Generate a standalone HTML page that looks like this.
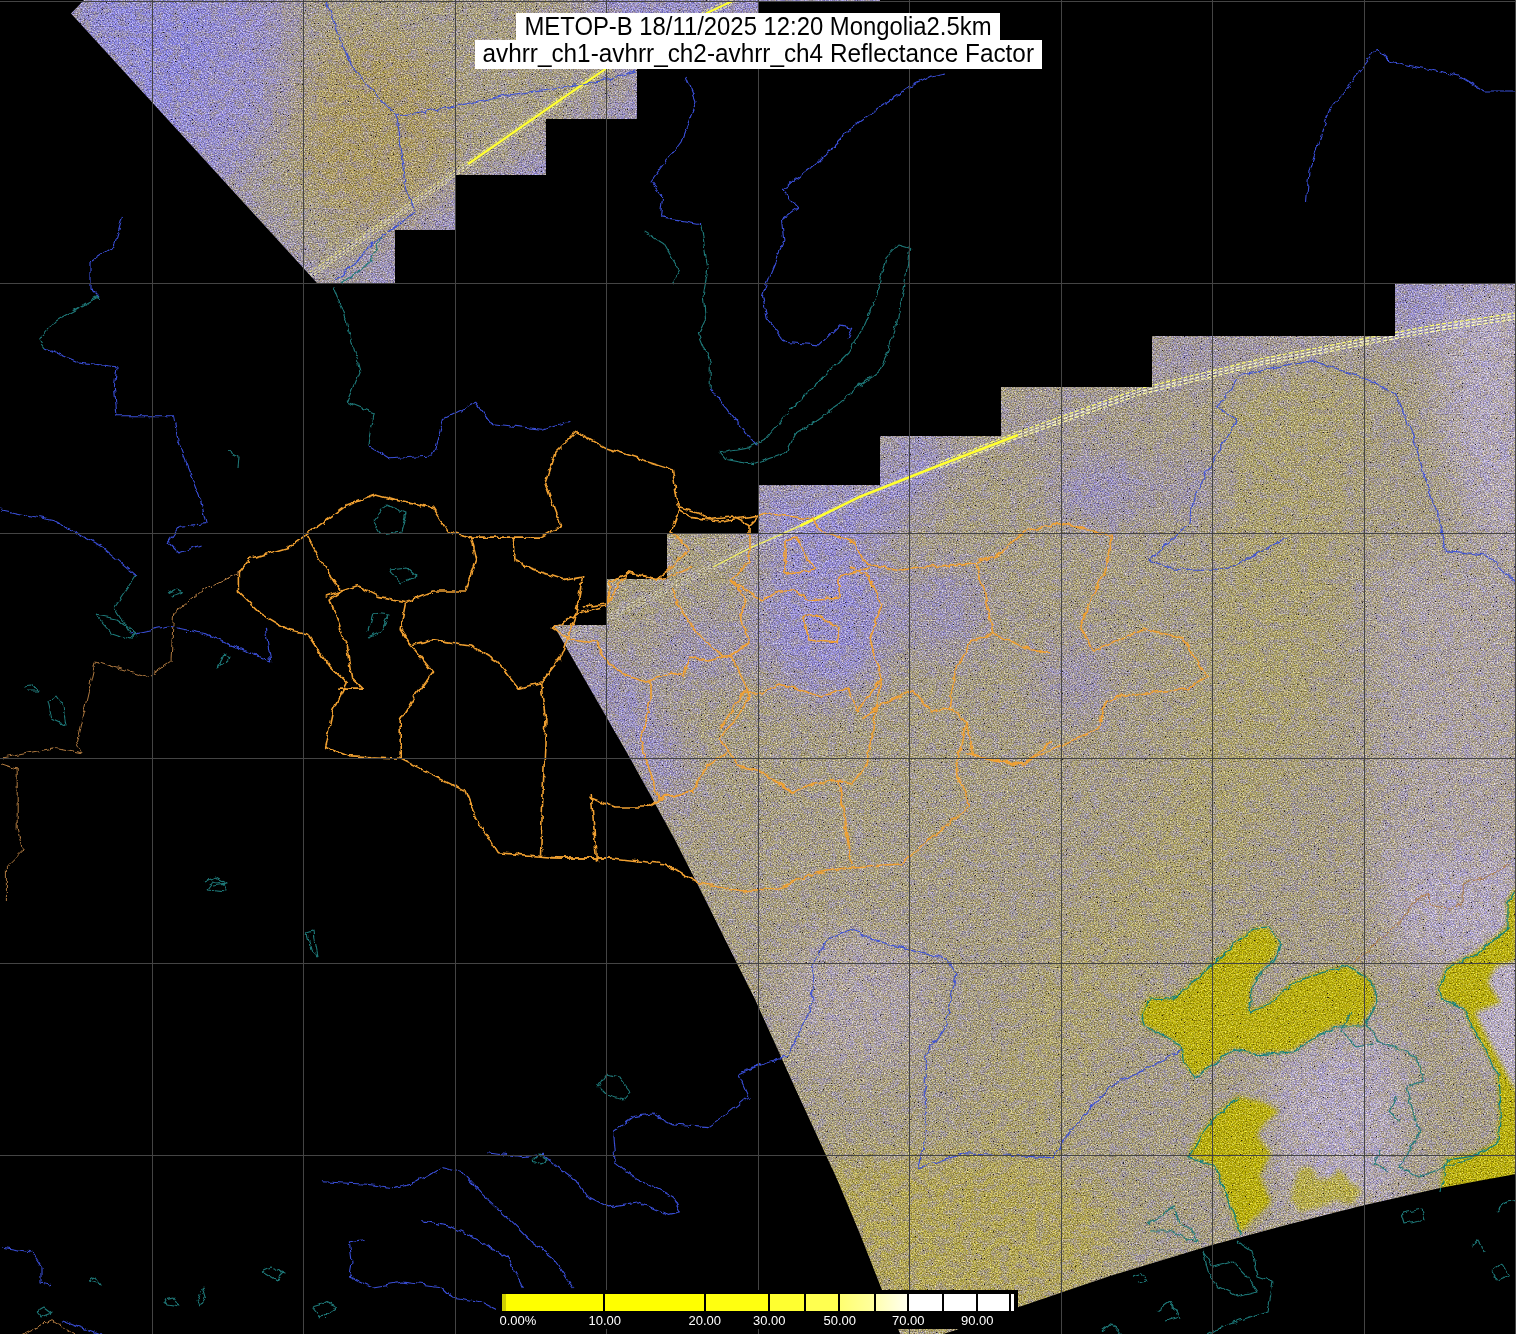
<!DOCTYPE html>
<html><head><meta charset="utf-8"><title>METOP-B</title>
<style>
html,body{margin:0;padding:0;background:#000;width:1516px;height:1334px;overflow:hidden}
svg{position:absolute;left:0;top:0;display:block}
</style></head><body>
<svg width="1516" height="1334" viewBox="0 0 1516 1334">
<defs>
<clipPath id="sw"><path d="M84,0 L71,13.5 L317,283 L395,283 L395,230 L455.5,230 L455.5,175 L546,175 L546,119 L637,119 L637,60 L758.5,60 L758.5,2 L880,2 L880,0 Z M553.4,625 L607,625 L607,579 L667,579 L667,533 L758.5,533 L758.5,485 L880,485 L880,436 L1001,436 L1001,387 L1152,387 L1152,336 L1395,336 L1395,284 L1516,284 L1516,1174 L1440,1188 L1365,1205 L1290,1224 L1212,1245 L1110,1276 L1016,1308 L956,1330 L905,1346 L882,1290 L860,1234 L837.4,1180 L796,1090 L755.3,1000 L736.8,963 L706,901 L675,840 L652,798 L629.4,757 Z"/></clipPath>
<filter id="bl" x="-10%" y="-10%" width="120%" height="120%"><feGaussianBlur stdDeviation="20"/></filter>
<filter id="bl2" x="-10%" y="-10%" width="120%" height="120%"><feGaussianBlur stdDeviation="2"/></filter>
<filter id="nz" x="0" y="0" width="1516" height="1334" filterUnits="userSpaceOnUse" color-interpolation-filters="sRGB">
  <feTurbulence type="fractalNoise" baseFrequency="0.71 0.83" numOctaves="2" seed="7" result="t"/>
  <feColorMatrix in="t" type="matrix" values="0.7 0.22 0.08 0 0  0.7 0.2 0 0.1 0  0.7 -0.28 0 0 0.28  0 0 0 0 1" result="t2"/>
  <feComposite in="SourceGraphic" in2="t2" operator="arithmetic" k1="0" k2="1" k3="1.2" k4="-0.6" result="c"/>
  <feTurbulence type="fractalNoise" baseFrequency="0.77" numOctaves="1" seed="21" result="s"/>
  <feColorMatrix in="s" type="matrix" values="0 0 0 0 0.12  0 0 0 0 0.1  0 0 0 0 0.12  40 0 0 0 -29.4" result="sp"/>
  <feComposite in="sp" in2="c" operator="over"/>
</filter>
<filter id="mot2" x="0" y="0" width="1516" height="1334" filterUnits="userSpaceOnUse" color-interpolation-filters="sRGB">
  <feTurbulence type="fractalNoise" baseFrequency="0.11 0.13" numOctaves="2" seed="29"/>
  <feColorMatrix type="matrix" values="0 0 0 0 0.66  0 0 0 0 0.6  0 0 0 0 0.42  4.5 0 0 0 -2.0"/>
</filter>
<filter id="mot" x="0" y="0" width="1516" height="1334" filterUnits="userSpaceOnUse" color-interpolation-filters="sRGB">
  <feTurbulence type="fractalNoise" baseFrequency="0.11 0.13" numOctaves="2" seed="11"/>
  <feColorMatrix type="matrix" values="0 0 0 0 0.58  0 0 0 0 0.55  0 0 0 0 0.84  4.5 0 0 0 -2.0"/>
</filter>
<filter id="jag" x="0" y="0" width="1516" height="1334" filterUnits="userSpaceOnUse">
  <feTurbulence type="turbulence" baseFrequency="0.08" numOctaves="2" seed="5" result="jt"/>
  <feDisplacementMap in="SourceGraphic" in2="jt" scale="5" xChannelSelector="R" yChannelSelector="G"/>
</filter>
<linearGradient id="g5" x1="0" x2="1" y1="0" y2="0"><stop offset="0" stop-color="#ffff70"/><stop offset="1" stop-color="#ffffa0"/></linearGradient><linearGradient id="g6" x1="0" x2="1" y1="0" y2="0"><stop offset="0" stop-color="#ffffb0"/><stop offset="1" stop-color="#fffff0"/></linearGradient>
</defs>
<rect width="1516" height="1334" fill="#000"/>
<g clip-path="url(#sw)"><g filter="url(#nz)">
<rect width="1516" height="1334" fill="#a89f88"/>
<g filter="url(#bl)"><path d="M40,-20 L295,-20 L280,100 L250,180 L300,260 L330,300 L250,300 Z" fill="#978fd0"/><ellipse cx="375" cy="130" rx="75" ry="95" fill="#ab9a68"/><path d="M60,-20 L230,-20 L200,80 L160,140 L100,60 Z" fill="#8c88e2" opacity="0.7"/><ellipse cx="250" cy="210" rx="40" ry="50" fill="#a89f88" opacity="0.5"/><ellipse cx="500" cy="60" rx="50" ry="50" fill="#a89f88" opacity="0.6"/><path d="M320,300 L455,200 L560,140 L650,80 L700,90 L650,140 L560,190 L455,250 L400,300 Z" fill="#978fd0"/><path d="M570,-20 L900,-20 L900,60 L640,70 L600,40 Z" fill="#978fd0"/><path d="M745,478 L880,478 L890,430 L960,430 L930,500 L880,540 L745,545 Z" fill="#978fd0"/><path d="M1380,270 L1530,270 L1530,340 L1380,340 Z" fill="#978fd0"/><path d="M990,420 L1152,375 L1152,330 L1395,330 L1395,320 L1530,300 L1530,320 L1400,338 L1260,360 L1140,392 L1018,437 L990,445 Z" fill="#978fd0" opacity="0.6"/><ellipse cx="825" cy="615" rx="70" ry="85" fill="#978fd0"/><path d="M540,615 L600,640 L650,700 L690,780 L680,820 L630,760 Z" fill="#978fd0"/><ellipse cx="700" cy="650" rx="45" ry="35" fill="#978fd0" opacity="0.7"/><ellipse cx="945" cy="610" rx="40" ry="50" fill="#978fd0" opacity="0.7"/><ellipse cx="1100" cy="490" rx="50" ry="35" fill="#978fd0" opacity="0.8"/><ellipse cx="1190" cy="485" rx="25" ry="25" fill="#978fd0" opacity="0.8"/><ellipse cx="1075" cy="680" rx="35" ry="40" fill="#978fd0" opacity="0.6"/><path d="M1440,300 L1530,300 L1530,560 L1470,520 L1440,420 Z" fill="#b6acc2"/><path d="M1370,560 L1530,540 L1530,900 L1380,880 Z" fill="#b6acc2" opacity="0.5"/><path d="M1230,375 L1360,360 L1340,620 L1300,760 L1230,880 L1150,960 L1080,1100 L1040,1250 L960,1300 L960,1150 L1040,950 L1150,820 L1210,650 Z" fill="#aca274"/><ellipse cx="855" cy="1000" rx="75" ry="70" fill="#b6acc2" opacity="0.55"/><path d="M790,1160 L1000,1150 L1120,1200 L1100,1290 L980,1330 L880,1330 Z" fill="#b2a65a"/><path d="M1380,860 L1530,850 L1530,965 L1400,965 Z" fill="#b6acc2"/><path d="M1262,1065 L1340,1035 L1400,1030 L1405,1195 L1290,1225 L1275,1120 Z" fill="#b6acc2"/><ellipse cx="1470" cy="1090" rx="30" ry="60" fill="#a89f88"/><ellipse cx="1495" cy="1015" rx="25" ry="50" fill="#b6acc2"/></g>
<rect width="1516" height="1334" fill="#fff" filter="url(#mot)" opacity="0.3"/>
<rect width="1516" height="1334" fill="#fff" filter="url(#mot2)" opacity="0.28"/>
<g filter="url(#bl2)"><path d="M1140,1014 L1148.5,997 L1171,998 L1191,982.5 L1214,961 L1240,937 L1254,928 L1268,927 L1279.5,942.7 L1274,957 L1259.6,971 L1252.5,982.6 L1248,1011 L1268,1002.5 L1291,982.6 L1319,971 L1348,965.5 L1370.7,979.7 L1376,999.7 L1362,1025 L1336.5,1025 L1319,1034 L1291,1051 L1256.7,1053.8 L1234,1048 L1211,1065 L1194,1076.6 L1182.7,1062 L1180,1045 L1162.7,1034 L1143,1025 Z" fill="#b7ad16"/><path d="M1214,1116.5 L1237,1096.5 L1262.5,1102 L1279.5,1111 L1262.5,1125 L1256.7,1136 L1271,1153.5 L1259.6,1176 L1271,1202 L1239.7,1233 L1225.4,1193 L1214,1165 L1188,1156 L1199.8,1133.6 Z" fill="#b7ad16"/><path d="M1516,885.5 L1507,900.8 L1507,926.3 L1476.5,951.8 L1445.9,967 L1438,987.5 L1440.8,997.7 L1463.7,1007.9 L1471.4,1028.3 L1484.1,1048.7 L1496.9,1071.6 L1499.4,1115 L1496.9,1140.5 L1476.5,1153.2 L1445.9,1158.3 L1440,1190 L1516,1190 Z" fill="#b7ad16"/><path d="M1298,1170 L1312,1165 L1318,1180 L1330,1178 L1340,1168 L1350,1182 L1362,1190 L1352,1205 L1335,1200 L1320,1208 L1300,1212 L1290,1198 Z" fill="#b7ad16" opacity="0.6"/><path d="M1516,962 L1497,967 L1489,982 L1502,1003 L1476.5,1013 L1489,1038.5 L1507,1071.6 L1516,1089.5 Z" fill="#b6acc2"/></g>
</g>
<g fill="none"><path d="M310,275 L440,184 L560,100 L606,68.6 L708,12.5 L732,1.3" stroke="#ffffd0" stroke-width="1" stroke-dasharray="3,2" opacity="0.85"/><path d="M940,465 L1018,435 L1140,391.5 L1260,362 L1388,337 L1435,328 L1516,316" stroke="#ffffd0" stroke-width="1.2" stroke-dasharray="4,2" opacity="1"/><path d="M556.5,641.5 L636,604 L713,567 L751,547.5 L790,532.7 L860,496.7 L940,465" stroke="#f8f8e0" stroke-width="1" stroke-dasharray="3,3" opacity="0.6"/><path d="M310,272 L440,181 L560,97 L606,65.6 L708,9.5 L732,-1.7" stroke="#ffff70" stroke-width="1" stroke-dasharray="3,2" opacity="0.85"/><path d="M940,462 L1018,432 L1140,388.5 L1260,359 L1388,334 L1435,325 L1516,313" stroke="#ffff70" stroke-width="1.2" stroke-dasharray="4,2" opacity="1"/><path d="M556.5,638.5 L636,601 L713,564 L751,544.5 L790,529.7 L860,493.7 L940,462" stroke="#f8f8e0" stroke-width="1" stroke-dasharray="3,3" opacity="0.6"/><path d="M310,278 L440,187 L560,103 L606,71.6 L708,15.5 L732,4.3" stroke="#ffffa0" stroke-width="1" stroke-dasharray="3,2" opacity="0.85"/><path d="M940,468 L1018,438 L1140,394.5 L1260,365 L1388,340 L1435,331 L1516,319" stroke="#ffffa0" stroke-width="1.2" stroke-dasharray="4,2" opacity="1"/><path d="M556.5,644.5 L636,607 L713,570 L751,550.5 L790,535.7 L860,499.7 L940,468" stroke="#f8f8e0" stroke-width="1" stroke-dasharray="3,3" opacity="0.6"/><path d="M468,164 L560,100 L606,68.6 L708,12.5 L732,1.3" stroke="#ffff30" stroke-width="2.2"/><path d="M713,567 L751,547.5 L800,526" stroke="#ffff50" stroke-width="1.4" opacity="0.8"/><path d="M800,526 L860,496.7 L940,465 L1018,435" stroke="#ffff30" stroke-width="2.6"/></g>
</g>
<g fill="none" stroke="#f0a030" stroke-width="1.6" stroke-linejoin="round" opacity="1" filter="url(#jag)"><path d="M237.4,571 L248.2,557.6 L286,546.8 L304.8,533.4 L345.3,503.7 L375,492.9 L393.8,498.3 L431.6,506.4 L447.8,530.7 L469.4,536.1 L517.9,536.1 L539.5,536.1 L560,525.3 L554,509.7 L543.8,482 L554,451 L574.8,430.3 L605.9,447.6 L671.4,468 L678,509.7 L690,516.6 L720,520 L759,514"/><path d="M237.4,571 L237.4,590 L259,611.6 L286,627.8 L307.5,633.2 L329,665.5 L345.3,681.7 L331.8,708.7 L323.7,746.5 L345.3,754.6 L399.2,757.3 L464,789.6 L474.7,816.6 L496.3,851.7 L560,857 L610,857"/><path d="M304.8,533.4 L318.3,557.6 L339.9,590 L329,598.1 L345.3,644 L350.7,676.3 L361.5,687.1 L337.2,687.1"/><path d="M323.7,595.4 L356,584.6 L377.6,595.4 L404.6,600.8 L431.6,590 L464,590 L474.7,557.6 L469.4,536.1"/><path d="M404.6,600.8 L399.2,627.8 L410,644 L431.6,671 L415.4,692.5 L399.2,719.5 L399.2,757.3"/><path d="M410,644 L431.6,638.6 L469.4,644 L496.3,660.2 L517.9,687.1 L539.5,681.7 L560,654.8 L574.8,613 L581.7,575 L561,578.6 L530,568 L512.8,558 L512.5,536.1"/><path d="M539.5,681.7 L544.9,719.5 L539.5,854.5"/><path d="M590.3,794 L595.5,859.7"/><path d="M581.7,606 L606,602.8 L609,582 L626.6,571.7 L661,578.6 L690,565"/><path d="M550,626 L568,638 L595,641 L607,662 L625,674 L646,680 L670,671 L682,674 L688,656 L706,659 L730,653 L748,641 L739,614 L745,596 L730,578 L748,560 L748,524 L760,512 L811,518 L820,530 L850,539 L865,563 L900,569 L907.6,568.3 L938,565 L975,561.6 L995.3,554.8 L1022.3,531.2 L1059.7,522.1 L1110.7,534.9 L1104.4,566.7 L1078.9,624.1 L1091.6,649.6 L1142.6,627.3 L1180.8,636.8 L1206.3,675 L1187.2,687.8 L1123.5,694.2 L1104.4,700.5 L1098,726 L1072.5,738.8 L1015.2,764.3 L964.2,751.5"/><path d="M550,626 L559,623 L580,611 L604,605 L619,581 L628,572 L655,578 L667,569 L688,548 L676,536 L670,530 L679,506 L700,512 L706,518 L730,515 L742,521 L748,524"/><path d="M670,587 L679,608 L694,629 L718,653 L730,656 L742,680 L748,695 L736,716 L724,728 L718,737 L727,749 L724,752 L706,764 L691,791 L658,797 L646,764 L640,740 L649,698 L649,680"/><path d="M589,797 L613,806 L646,806 L661,797 L691,791"/><path d="M727,749 L736,764 L760,770 L778,782 L790,791 L814,782 L838,779 L850,782 L865,764 L874,716 L880,677 L868,638 L880,605 L868,575 L850,566"/><path d="M838,779 L850,863"/><path d="M718,728 L742,692 L760,692 L778,683 L820,695 L847,686 L856,710 L880,677"/><path d="M730,578 L760,599 L778,590 L796,590 L808,599 L838,596 L838,575 L868,566"/><path d="M784,539 L796,536 L808,560 L814,569 L784,572 L784,539"/><path d="M802,614 L814,614 L838,626 L835,641 L808,638 L802,614"/><path d="M550,857 L610,857 L664,863 L694,881 L742,890 L778,887 L814,872 L850,866 L900,863 L921.1,845 L968.4,804.5 L954.9,767.4 L965,720.1"/><path d="M860.4,716.8 L887.4,700 L911,689.8 L931.2,710 L948.1,706.7 L965,720.1 L971.7,753.9 L1022.3,764 L1050,740.4"/><path d="M948.1,706.7 L954.9,666.2 L971.7,639.2 L992,632.4 L985.2,598.7 L975,561.6"/><path d="M992,632.4 L1022.3,645.9 L1050,652.7"/></g><g fill="none" stroke="#b07a40" stroke-width="1" stroke-linejoin="round" opacity="1" filter="url(#jag)"><path d="M237.4,571 L199.6,590 L172.6,611.6 L170,660 L145.7,676.3 L94.4,660 L75.5,741 L81,751.9 L54,746.5 L0,757.3"/><path d="M20,1334 L50,1318.7 L75,1334"/><path d="M0,762.7 L16.2,768 L16.2,827.4 L21.6,849 L5.4,865.2 L5.4,900"/><path d="M1354,962 L1400,918.6 L1415.3,898 L1428,893 L1430.6,903.3 L1451,908.4 L1461.2,903.3 L1461.2,883 L1486.7,875.3 L1509.6,862.5"/></g><g fill="none" stroke="#3a4fd8" stroke-width="1.1" stroke-linejoin="round" opacity="1" filter="url(#jag)"><path d="M1147,559 L1188.8,521.7 L1193.4,493.9 L1216.7,452 L1235.3,419.5 L1216.7,405.5 L1240,373 L1309.6,359 L1365.4,377.6 L1393.3,391.6 L1411.9,433.4 L1421.2,470.6 L1435.2,507.8 L1444.5,549.6 L1486.3,554.3 L1516,582.2"/><path d="M1147,559 L1174.8,568.2 L1226,568.2 L1286.4,535.7"/><path d="M740,1069.9 L786,1054.5 L811.7,1003.3 L811.7,962.4 L827,936.8 L847.5,929.1 L883.3,941.9 L944.8,957.3 L955,972.6 L944.8,1023.8 L924.3,1054.5 L924.3,1136.4 L916.6,1167.1 L965.2,1151.8 L1052.2,1156.9 L1067.6,1131.3 L1108.6,1085.2 L1180.2,1049.4"/><path d="M649.9,180 L661.7,194.2 L659.4,215.6 L699.7,222.7"/><path d="M709.2,386.6 L723.5,405.6 L742.5,429.3 L756.7,443.6"/><path d="M945,72 L930,75 L905,88 L880,105 L858,120 L818,160 L792.4,180 L780.5,189.5 L797.1,206.1 L780.5,218 L782.9,239.4 L766.2,279.7 L761.5,294 L766.2,317.7 L785.2,341.5 L818.5,343.9 L837.5,324.9 L851.7,327.2 L847,336.7"/><path d="M121.4,215 L113.3,244.7 L89,261 L89,288 L97,296"/><path d="M43,347 L75.5,360.7 L116,366 L113.3,385 L116,414.7 L172.6,414.7 L178,444.4 L199.6,498.3 L205,522.6 L178,525.3 L167.2,541.5 L178,552 L199.6,544"/><path d="M0,509 L54,520 L102.5,546.8 L134.9,573.8"/><path d="M129.5,633 L167.2,625 L205,633 L242.8,649.4 L269.7,660 L264.3,627.8"/><path d="M366.8,444.4 L388.4,457.8 L431.6,455 L442.4,417.4 L474.7,401.2 L490.9,422.8 L539.5,428.2 L560,422.8 L570,420"/><path d="M325,0 L350,65 L395,115 L405,190 L415,210 L380,235 L335,280"/><path d="M395,115 L455,105 L500,95 L600,80 L635,70"/><path d="M685,75 L695,100 L680,140 L650,180"/><path d="M1305.5,200 L1308,170 L1328,110 L1358,70 L1375.5,47.5 L1388,60 L1458,75 L1483,90 L1516,90"/><path d="M320.9,1180.8 L366,1183.3 L391,1186.8 L416,1180.8 L441.2,1165.8 L461.2,1170.8 L481.3,1193.3 L511.4,1220.9 L531.4,1241 L551.5,1256 L571.5,1286"/><path d="M421,1219.9 L451.2,1225.9 L481.3,1241 L506.3,1256 L521.4,1286"/><path d="M363.5,1238.5 L348.4,1241 L351,1261 L348.4,1276 L371,1286 L401,1281 L441.2,1286 L451.2,1296 L481.3,1301 L501.3,1311"/><path d="M760,1063 L737,1073 L747,1095.6 L722,1115.6 L707,1125.6 L672,1123 L652,1113 L632,1115.6 L611.6,1130.7 L614,1160.7 L632,1175.8 L652,1185.8 L672,1195.8 L679.3,1211 L666.8,1213.4 L636.7,1200.8 L606.6,1205.9 L586.5,1195.8 L576.5,1180.8 L556.5,1165.8 L541.4,1153.2 L521.4,1155.7 L486.3,1150.7"/><path d="M0,1246 L30,1251 L40,1266 L40,1281 L50,1283.6"/><path d="M60,1318.7 L100,1334"/></g><g fill="none" stroke="#1f7a7a" stroke-width="1.1" stroke-linejoin="round" opacity="1" filter="url(#jag)"><path d="M1362,1017 L1370,1030 L1376.4,1039.5 L1390,1045 L1405,1051 L1416,1056.6 L1422,1079 L1405,1085 L1410.6,1108 L1419,1130.7 L1405,1153.5 L1399,1165 L1416,1176 L1430,1170 L1447.6,1165 L1460,1160 L1476,1153.5"/><path d="M1350,1010 L1340,1030 L1355,1045 L1372,1042"/><path d="M1395,1095 L1388,1110 L1398,1120"/><path d="M1380,1150 L1372,1162 L1386,1170"/><path d="M1236,1240 L1251,1250 L1256,1275 L1271,1280 L1266,1310 L1236,1320 L1221,1325 L1206,1334"/><path d="M1201,1250 L1211,1265 L1231,1260 L1246,1275 L1256,1290 L1236,1295 L1216,1285 L1206,1270 L1201,1250"/><path d="M1131,1275 L1140,1272 L1146,1280 L1136,1282"/><path d="M1401,1212 L1421,1208 L1424,1218 L1404,1222 L1401,1212"/><path d="M1146,1222 L1160,1215 L1172,1205 L1178,1222 L1190,1228 L1196,1240 L1182,1236 L1168,1230 L1150,1230"/><path d="M1496,1210 L1506,1200 L1516,1198"/><path d="M1470,1245 L1478,1238 L1482,1250"/><path d="M1490,1270 L1500,1262 L1508,1275 L1496,1280 L1490,1270"/><path d="M1156,1310 L1170,1300 L1178,1316 L1164,1320"/><path d="M1100,1330 L1110,1322 L1120,1334"/><path d="M597,1085 L605,1073 L618,1076 L629,1090 L622,1098 L605,1093 L597,1085"/><path d="M206,888 L212,880 L222,882 L225,890 L206,888"/><path d="M306,932 L312,930 L314,945 L316,955 L310,948 L306,932"/><path d="M261,1270 L270,1266 L283,1272 L276,1279 L261,1270"/><path d="M163,1298 L172,1296 L178,1306 L166,1304 L163,1298"/><path d="M196,1300 L202,1286 L205,1296 L198,1306 L196,1300"/><path d="M311,1305 L325,1301 L336,1306 L320,1316 L311,1305"/><path d="M88,1280 L95,1276 L100,1283 L88,1280"/><path d="M35,1310 L42,1306 L50,1312 L40,1316 L35,1310"/><path d="M531,1160 L538,1153 L546,1158 L540,1163 L531,1160"/><path d="M719.9,450.7 L747.2,446 L766.2,436.5 L790,408 L809,389 L828,370 L847,351 L861.2,327.2 L875.5,294 L885,256 L896.9,243 L908.7,246.5 L904,282 L894.5,327.2 L885,355.7 L877.8,370 L858.8,384.2 L837.5,403.2 L813.7,419.8 L794.7,431.7 L785.2,450.7 L752,462.6 L725.9,457.8 L719.9,450.7"/><path d="M699.7,222.7 L706.9,267.9 L702.1,294 L704.5,317.7 L697.4,332 L709.2,360.5 L709.2,386.6"/><path d="M642.7,229.9 L661.7,241.7 L678.4,270.2 L671.2,282.1"/><path d="M97,296 L54,320 L37.8,339 L43,347"/><path d="M134.9,573.8 L113.3,606 L129.5,633"/><path d="M331.8,285.2 L345.3,320.3 L358.8,368.8 L345.3,401.2 L372.2,412 L366.8,444.4"/><path d="M372,520 L385,504 L405,512 L400,530 L380,533 L372,520"/><path d="M388,568 L405,566 L415,575 L400,582 L388,568"/><path d="M367,630 L372,612 L388,614 L380,630 L367,636"/><path d="M227,450 L237,455 L236,466"/><path d="M167,592 L175,588 L183,591 L170,595"/><path d="M94,614 L115,618 L135,632 L128,638 L110,632 L94,614"/><path d="M216,668 L222,652 L229,656 L216,668"/><path d="M22,685 L30,684 L38,690 L26,690"/><path d="M46,700 L55,695 L62,705 L65,725 L50,718 L46,700"/><path d="M205,881 L215,876 L226,882 L212,884"/><path d="M380,235 L370,260 L340,283"/></g><g fill="none" stroke="#108080" stroke-width="1.2" stroke-linejoin="round" opacity="1" filter="url(#jag)"><path d="M1140,1014 L1148.5,997 L1171,998 L1191,982.5 L1214,961 L1240,937 L1254,928 L1268,927 L1279.5,942.7 L1274,957 L1259.6,971 L1252.5,982.6 L1248,1011 L1268,1002.5 L1291,982.6 L1319,971 L1348,965.5 L1370.7,979.7 L1376,999.7 L1362,1025 L1336.5,1025 L1319,1034 L1291,1051 L1256.7,1053.8 L1234,1048 L1211,1065 L1194,1076.6 L1182.7,1062 L1180,1045 L1162.7,1034 L1143,1025 L1140,1014"/><path d="M1239.7,1233 L1225.4,1193 L1214,1165 L1188,1156 L1199.8,1133.6 L1214,1116.5 L1237,1096.5"/><path d="M1516,885.5 L1507,900.8 L1507,926.3 L1476.5,951.8 L1445.9,967 L1438,987.5 L1440.8,997.7 L1463.7,1007.9 L1471.4,1028.3 L1484.1,1048.7 L1496.9,1071.6 L1499.4,1115 L1496.9,1140.5 L1476.5,1153.2 L1445.9,1158.3 L1440,1190"/></g>
<g stroke="#444444" stroke-width="1" fill="none" shape-rendering="crispEdges"><line x1="152.5" y1="0" x2="152.5" y2="1334"/><line x1="303.5" y1="0" x2="303.5" y2="1334"/><line x1="455.5" y1="0" x2="455.5" y2="1334"/><line x1="606.5" y1="0" x2="606.5" y2="1334"/><line x1="758.5" y1="0" x2="758.5" y2="1334"/><line x1="909.5" y1="0" x2="909.5" y2="1334"/><line x1="1061.5" y1="0" x2="1061.5" y2="1334"/><line x1="1212.5" y1="0" x2="1212.5" y2="1334"/><line x1="1364.5" y1="0" x2="1364.5" y2="1334"/><line x1="1515.5" y1="0" x2="1515.5" y2="1334"/><line x1="0" y1="1.5" x2="1516" y2="1.5"/><line x1="0" y1="283.5" x2="1516" y2="283.5"/><line x1="0" y1="533.5" x2="1516" y2="533.5"/><line x1="0" y1="758.5" x2="1516" y2="758.5"/><line x1="0" y1="963.5" x2="1516" y2="963.5"/><line x1="0" y1="1155.5" x2="1516" y2="1155.5"/></g>
<rect x="496" y="1290" width="522" height="39" fill="#000"/><rect x="502" y="1294" width="102" height="17" fill="#ffff00"/><rect x="604" y="1294" width="101" height="17" fill="#ffff00"/><rect x="705" y="1294" width="64" height="17" fill="#ffff10"/><rect x="769" y="1294" width="36" height="17" fill="#ffff30"/><rect x="805" y="1294" width="34" height="17" fill="#ffff50"/><rect x="839" y="1294" width="36" height="17" fill="url(#g5)"/><rect x="875" y="1294" width="33" height="17" fill="url(#g6)"/><rect x="908" y="1294" width="106" height="17" fill="#ffffff"/><rect x="502" y="1294" width="4" height="17" fill="#b0b000" opacity="0.6"/><rect x="603" y="1294" width="2" height="19" fill="#000"/><rect x="704" y="1294" width="2" height="19" fill="#000"/><rect x="768" y="1294" width="2" height="19" fill="#000"/><rect x="804" y="1294" width="2" height="19" fill="#000"/><rect x="838" y="1294" width="2" height="19" fill="#000"/><rect x="874" y="1294" width="2" height="19" fill="#000"/><rect x="907" y="1294" width="2" height="19" fill="#000"/><rect x="942" y="1294" width="2" height="19" fill="#000"/><rect x="976" y="1294" width="2" height="19" fill="#000"/><rect x="1009" y="1294" width="2" height="19" fill="#000"/><g font-family="Liberation Sans, sans-serif" font-size="13" fill="#fff"><text x="499.5" y="1325">0.00%</text><text x="588.5" y="1325">10.00</text><text x="688.5" y="1325">20.00</text><text x="753" y="1325">30.00</text><text x="823.5" y="1325">50.00</text><text x="892" y="1325">70.00</text><text x="961" y="1325">90.00</text></g>
<g font-family="Liberation Sans, sans-serif">
<rect x="516" y="13" width="484" height="28" fill="#fff"/>
<rect x="475" y="40" width="567" height="29" fill="#fff"/>
<text x="524.5" y="35" font-size="25" textLength="467" lengthAdjust="spacingAndGlyphs" fill="#000">METOP-B 18/11/2025 12:20 Mongolia2.5km</text>
<text x="482.5" y="62" font-size="25" textLength="551.5" lengthAdjust="spacingAndGlyphs" fill="#000">avhrr_ch1-avhrr_ch2-avhrr_ch4 Reflectance Factor</text>
</g>
</svg>
</body></html>
